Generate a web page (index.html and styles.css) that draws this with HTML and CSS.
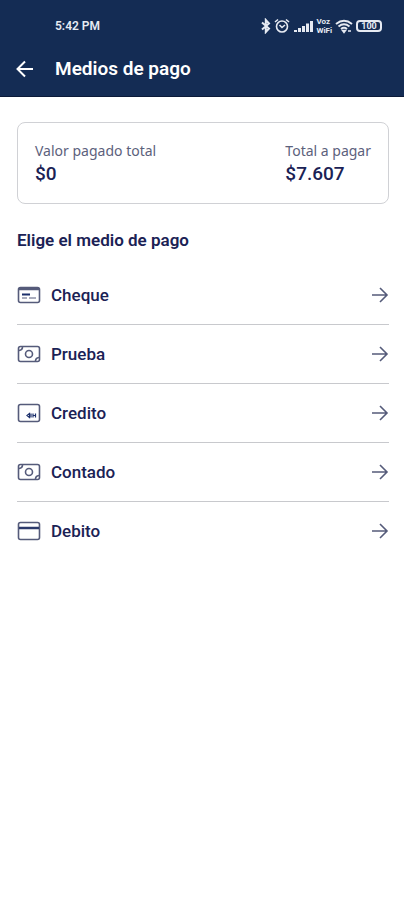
FILE: index.html
```html
<!DOCTYPE html>
<html lang="es">
<head>
  <meta charset="UTF-8" />
  <meta name="viewport" content="width=device-width, initial-scale=1.0"/>
  <title>Medios de pago</title>
  <link rel="stylesheet" href="styles.css">
</head>
<body>
  <header>
    <div class="status-bar">
      <span class="time">5:42 PM</span>
      <div class="status-icons">
        <svg width="10" height="16" viewBox="0 0 10 16" fill="none" stroke="currentColor" stroke-width="2"><path d="M1 4.500l7 6-3.200 3.500V2L8 5.500l-7 6"/></svg>
        <svg width="16" height="16" viewBox="0 0 16 16" fill="none" stroke="currentColor" stroke-width="1.600"><circle cx="8" cy="8.500" r="5.500"/><path d="M1 4l3-2.500M15 4l-3-2.500M5.500 7L8 9.500 11 7"/></svg>
        <svg width="20" height="16" viewBox="0 0 20 16" fill="currentColor"><path d="M1 12h3v2H1zM5 10h3v4H5zM9 8h3v6H9zM13 5.500h3V14h-3zM17 3h3v11h-3z"/></svg>
        <span class="vowifi"><span>Voz</span><span>WiFi</span></span>
        <svg width="18" height="16" viewBox="0 0 18 16" fill="none" stroke="currentColor" stroke-width="2"><path d="M1 6c5-4 11-4 16 0M3.500 8.500c3.500-2.800 7.500-2.800 11 0M6 11c2-1.600 4-1.600 6 0"/><path d="M7.500 12.500h3L9 14.500zM13 13h3" stroke-width="1.500"/></svg>
        <span class="battery">100</span>
      </div>
    </div>
    <div class="title-bar">
      <button class="back-btn" aria-label="Volver">
        <svg width="18" height="18" viewBox="0 0 18 18" fill="none" stroke="currentColor" stroke-width="2"><path d="M17 9H2M9 1.500L1.500 9 9 16.500"/></svg>
      </button>
      <h1>Medios de pago</h1>
    </div>
  </header>

  <main>
    <section class="summary">
      <div>
        <p class="label">Valor pagado total</p>
        <p class="amount">$0</p>
      </div>
      <div>
        <p class="label">Total a pagar</p>
        <p class="amount">$7.607</p>
      </div>
    </section>

    <h2>Elige el medio de pago</h2>

    <ul class="methods">
      <li>
        <a href="#cheque">
          <svg class="icon" viewBox="0 0 24 20"><rect x="1.500" y="2.500" width="21" height="15" rx="2"/><path d="M2 4h20" stroke-width="2.500"/><path d="M5 9.500h8" stroke="#1b2f6b" stroke-width="2"/><path d="M5 13h5M12 13h7" stroke-width="1"/></svg>
          <span>Cheque</span>
          <svg class="arrow" viewBox="0 0 18 18"><path d="M1 9h15M9 2l7 7-7 7"/></svg>
        </a>
      </li>
      <li>
        <a href="#prueba">
          <svg class="icon" viewBox="0 0 24 20"><rect x="1.500" y="2.500" width="21" height="15" rx="2"/><circle cx="12" cy="10" r="3.500"/><path d="M2 6.500q3.500-.5 3.500-3.500M22 13.500q-3.500.5-3.500 3.500"/></svg>
          <span>Prueba</span>
          <svg class="arrow" viewBox="0 0 18 18"><path d="M1 9h15M9 2l7 7-7 7"/></svg>
        </a>
      </li>
      <li>
        <a href="#credito">
          <svg class="icon" viewBox="0 0 24 20"><rect x="1.500" y="1.500" width="21" height="17" rx="2"/><path d="M12.500 10.500l-2.500 2 2.500 2zM14 10.500v4M16 10.500v4M16 12.500h2.500M18.500 10.500v4" stroke="#1b2f6b" stroke-width="1.200"/></svg>
          <span>Credito</span>
          <svg class="arrow" viewBox="0 0 18 18"><path d="M1 9h15M9 2l7 7-7 7"/></svg>
        </a>
      </li>
      <li>
        <a href="#contado">
          <svg class="icon" viewBox="0 0 24 20"><rect x="1.500" y="2.500" width="21" height="15" rx="2"/><circle cx="12" cy="10" r="3.500"/><path d="M2 6.500q3.500-.5 3.500-3.500M22 13.500q-3.500.5-3.500 3.500"/></svg>
          <span>Contado</span>
          <svg class="arrow" viewBox="0 0 18 18"><path d="M1 9h15M9 2l7 7-7 7"/></svg>
        </a>
      </li>
      <li>
        <a href="#debito">
          <svg class="icon" viewBox="0 0 24 20"><rect x="1.500" y="1.500" width="21" height="17" rx="2"/><path d="M2 7h20" stroke="#2c3a6b" stroke-width="2.500"/></svg>
          <span>Debito</span>
          <svg class="arrow" viewBox="0 0 18 18"><path d="M1 9h15M9 2l7 7-7 7"/></svg>
        </a>
      </li>
    </ul>
  </main>
</body>
</html>
```
FILE: styles.css
```css
* { margin: 0; padding: 0; box-sizing: border-box; }
body { background-color: #fff; color: #1b2255; font-family: Roboto, sans-serif; }

header {
  background-color: #142c54;
  color: #fff;
  padding: 16px 22px 15px 16px;
  border-bottom: 1px solid #0b1a38;
}

.status-bar {
  display: flex;
  justify-content: space-between;
  align-items: center;
  height: 20px;
  padding-left: 39px;
  color: #e6eaf2;
}

.time {
  font-size: 12px;
  font-weight: 600;
}

.status-icons {
  display: flex;
  align-items: center;
  gap: 3px;
}

.vowifi {
  display: flex;
  flex-direction: column;
  font-size: 8px;
  font-weight: 700;
  line-height: 9px;
}

.battery {
  width: 26px;
  height: 12px;
  border: 2px solid #e6eaf2;
  border-radius: 4px;
  font-size: 9px;
  font-weight: 700;
  line-height: 8px;
  text-align: center;
}

.title-bar {
  display: flex;
  align-items: center;
  gap: 21px;
  margin-top: 21px;
}

.back-btn {
  display: flex;
  background: none;
  border: none;
  color: #fff;
  cursor: pointer;
}

h1 {
  font-size: 19px;
  font-weight: 600;
  line-height: 24px;
}

main { padding: 25px 15px 25px 17px; }

.summary {
  display: flex;
  justify-content: space-between;
  padding: 17px;
  border: 1px solid #d0d1d5;
  border-radius: 8px;
}

.label {
  color: #5c617c;
  font-family: "Noto Sans", sans-serif;
  font-size: 14px;
  line-height: 22px;
}

.amount {
  font-size: 19px;
  font-weight: 500;
  line-height: 24px;
}

h2 {
  margin: 26px 0 16px;
  font-size: 17px;
  font-weight: 600;
  line-height: 20px;
}

.methods { list-style: none; }
.methods li + li { border-top: 1px solid #c8c9cd; }

.methods a {
  display: flex;
  align-items: center;
  gap: 10px;
  height: 58px;
  color: #1b2255;
  font-size: 17px;
  font-weight: 500;
  text-decoration: none;
}

.methods svg {
  fill: none;
  stroke: #555b7a;
  stroke-width: 1.6;
}

.icon {
  width: 24px;
  height: 20px;
}

.arrow {
  width: 18px;
  height: 18px;
  margin-left: auto;
}
```
